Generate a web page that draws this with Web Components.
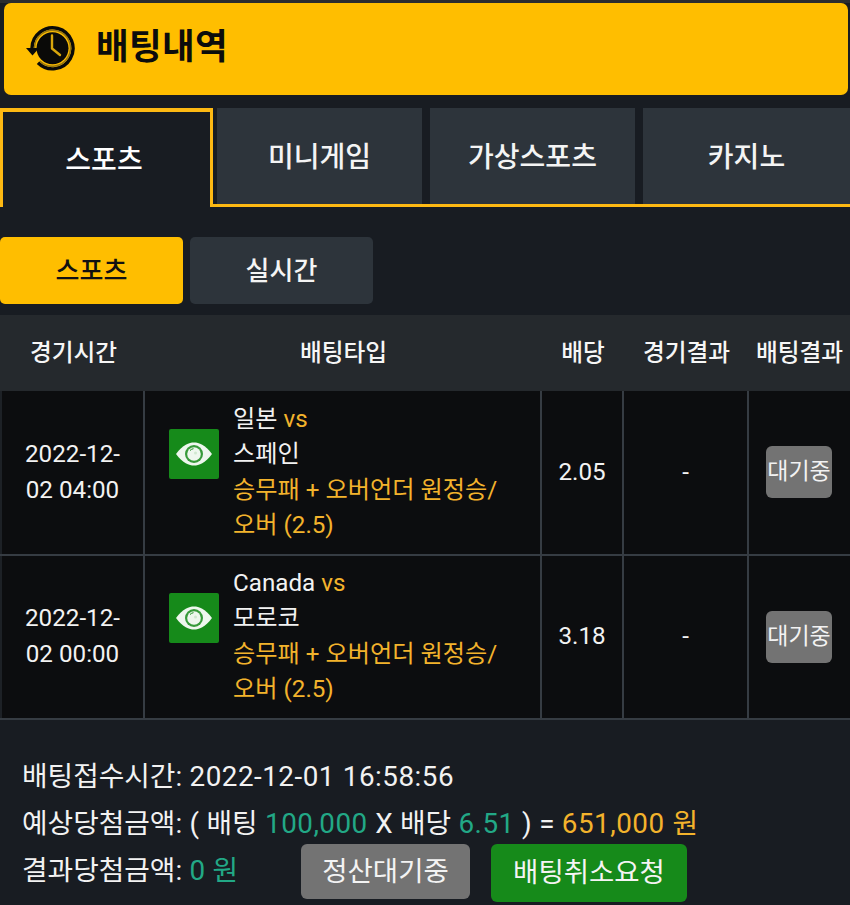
<!DOCTYPE html>
<html lang="ko"><head><meta charset="utf-8"><title>배팅내역</title>
<style>
html,body{margin:0;padding:0;background:#181c22;}
body{width:850px;height:905px;overflow:hidden;font-family:Roboto,"Noto Sans CJK KR",sans-serif;color:#fff;}
</style></head><body>
<bet-page></bet-page>
<script>
const FONT='Roboto,"Noto Sans CJK KR",sans-serif';
class BetHeader extends HTMLElement{constructor(){super();this.attachShadow({mode:'open'}).innerHTML=`<style>
:host{display:block;background:#2b2d2f;padding-top:3px}
.wrap{background:#181c22;padding:0 2px 13px 4px}
.bar{height:92px;background:#ffbe00;border-radius:7px;display:flex;align-items:center;color:#0c0c0c;box-sizing:border-box;padding-left:21px;gap:21px;padding-bottom:2px}
svg{display:block;width:50px;height:46px;flex:none}
h1{margin:0;font:700 35.500px/1 ${FONT};letter-spacing:.3px}
</style><div class="wrap"><div class="bar">
<svg viewBox="0 0 50 46" fill="none"><circle cx="27.500" cy="23.300" r="16" fill="#0a0a08"/><path d="M7 23.300A20.500 20.500 0 1 1 13 37.800" stroke="#0a0a08" stroke-width="3.400"/><path d="M9.500 23.300A18 18 0 1 1 14.800 36" stroke="#96760f" stroke-width="1.500"/><path d="M1 23H14L7.500 30.500Z" fill="#0a0a08"/><path d="M27 10.500V23.500L35 30" stroke="#d8a60c" stroke-width="2.400" stroke-linecap="round" stroke-linejoin="round"/></svg>
<h1><slot></slot></h1></div></div>`}}
customElements.define('bet-header',BetHeader);

class BetTabs extends HTMLElement{constructor(){super();this.attachShadow({mode:'open'}).innerHTML=`<style>
:host{display:grid;grid-template-columns:209px 205px 205px 207px;column-gap:8px;height:99px;box-sizing:border-box;position:relative}
.line{position:absolute;left:213px;right:0;bottom:0;height:3px;background:#fdb913}
</style><slot></slot><div class="line"></div>`}}
customElements.define('bet-tabs',BetTabs);
class BetTab extends HTMLElement{constructor(){super();this.attachShadow({mode:'open'}).innerHTML=`<style>
:host{display:flex;align-items:center;justify-content:center;box-sizing:border-box;height:96px;background:#2d343b;font:500 28px/1 ${FONT};color:#f4f4f4;padding-top:3px}
:host([active]){height:99px;background:#181c22;border:solid #fdb913;border-width:4px 3px 0 3px;margin-right:-4px;color:#fff;padding:2px 5px 0 0}
</style><slot></slot>`}}
customElements.define('bet-tab',BetTab);

class BetSub extends HTMLElement{constructor(){super();this.attachShadow({mode:'open'}).innerHTML=`<style>
:host{display:flex;align-items:center;justify-content:center;height:67px;width:183px;border-radius:5px;background:#2d343b;color:#f4f4f4;font:500 26px/1 ${FONT}}
:host([active]){background:#ffbe00;color:#111}
</style><slot></slot>`}}
customElements.define('bet-sub',BetSub);

const COLS='143px 397px 82px 125px 103px';
class BetHead extends HTMLElement{constructor(){super();this.attachShadow({mode:'open'}).innerHTML=`<style>
:host{display:grid;grid-template-columns:143px 397px 82px 125px 101px;height:76px;box-sizing:border-box;padding:2px 0 0 2px;background:#25292d;align-items:center;text-align:center;font:500 23.700px/1 ${FONT};color:#f6f6f6}
</style><slot></slot>`}}
customElements.define('bet-head',BetHead);

class BetRow extends HTMLElement{
constructor(){super();this.attachShadow({mode:'open'})}
connectedCallback(){const a=k=>this.getAttribute(k);this.shadowRoot.innerHTML=`<style>
:host{display:grid;grid-template-columns:${COLS};height:164px;box-sizing:border-box;background:#0c0d0f;border-bottom:2px solid #363c43;font:400 24.200px/35.500px ${FONT};color:#f2f2f2}
:host([first]){height:165px}
.c{display:flex;align-items:center;justify-content:center;text-align:center;border-left:2px solid #363c43;box-sizing:border-box;min-width:0}
.c.first{border-left:2px solid #1d2126;padding:0 15px 1px}
:host([first]) .c.first{padding-bottom:0}
.bet{justify-content:flex-start;align-items:flex-start;gap:14px;padding-left:24px;text-align:left}
.eye{flex:none;width:50px;height:50px;border-radius:2px;background:#168a1a;display:grid;place-items:center;margin-top:37px}
:host([first]) .eye{margin-top:38px}
.txt{width:270px;align-self:center;padding-bottom:1px}
:host([first]) .txt{padding-bottom:0}
.y{color:#f3b32c}
.wait{width:66px;height:52px;border-radius:6px;background:#737373;color:#f2f2f2;display:flex;align-items:center;justify-content:center;font-size:23px;white-space:nowrap;margin:-1px 0 0 -1px}
</style>
<div class="c first"><span>${a('time')}</span></div>
<div class="c bet"><div class="eye"><svg width="38" height="26" viewBox="0 0 38 26"><path d="M1 13C8 3.500 14 1.500 19 1.500S30 3.500 37 13C30 22.500 24 24.500 19 24.500S8 22.500 1 13Z" fill="#eef7ee"/><circle cx="19" cy="13" r="9" fill="#168a1a" opacity=".85"/><circle cx="19" cy="13" r="6.800" fill="#eef7ee"/><circle cx="20.500" cy="12" r="1.500" fill="#cfe8cf"/><path d="M15 9.500a6 6 0 0 1 3.500-1.800" stroke="#168a1a" stroke-width="1" fill="none"/></svg></div>
<div class="txt">${a('a')} <span class="y">vs</span><br>${a('b')}<br><span class="y">${a('type')}</span></div></div>
<div class="c">${a('odds')}</div><div class="c">-</div>
<div class="c"><div class="wait">대기중</div></div>`}}
customElements.define('bet-row',BetRow);

class BetBtn extends HTMLElement{constructor(){super();this.attachShadow({mode:'open'}).innerHTML=`<style>
:host{display:flex;align-items:center;justify-content:center;box-sizing:border-box;height:55px;width:169px;border-radius:6px;background:#737373;color:#f3f3f3;font:400 27.500px/1 ${FONT};flex:none}
:host([green]){background:#168a1a;height:58px;width:196px;color:#f4f4f4}
</style><slot></slot>`}}
customElements.define('bet-btn',BetBtn);

class BetFoot extends HTMLElement{constructor(){super();this.attachShadow({mode:'open'}).innerHTML=`<style>
:host{display:block;padding:33px 0 0 22px;font:400 27.800px/47px ${FONT};color:#f2f2f2;white-space:nowrap;word-spacing:.5px}
.n{letter-spacing:.5px}
.g{color:#22a886}.y{color:#f3b32c}
.row3{display:flex;align-items:flex-start;height:58px}
.l{width:279px;flex:none;line-height:47px}
.btns{display:flex;gap:21px;margin-top:-3px}
</style>
<div>배팅접수시간: <span class="n">2022-12-01 16:58:56</span></div>
<div>예상당첨금액: ( 배팅 <span class="g n">100,000</span> X 배당 <span class="g n">6.51</span> ) = <span class="y n">651,000 원</span></div>
<div class="row3"><span class="l">결과당첨금액: <span class="g">0 원</span></span><div class="btns"><slot></slot></div></div>`}}
customElements.define('bet-foot',BetFoot);

class BetPage extends HTMLElement{constructor(){super();this.attachShadow({mode:'open'}).innerHTML=`<style>
:host{display:block;width:850px}
.subs{display:flex;gap:7px;margin:30px 0 11px}
</style>
<bet-header>배팅내역</bet-header>
<bet-tabs><bet-tab active>스포츠</bet-tab><bet-tab>미니게임</bet-tab><bet-tab>가상스포츠</bet-tab><bet-tab>카지노</bet-tab></bet-tabs>
<div class="subs"><bet-sub active>스포츠</bet-sub><bet-sub>실시간</bet-sub></div>
<bet-head><span>경기시간</span><span>배팅타입</span><span>배당</span><span>경기결과</span><span>배팅결과</span></bet-head>
<bet-row first time="2022-12-02 04:00" a="일본" b="스페인" type="승무패 + 오버언더 원정승/오버 (2.5)" odds="2.05"></bet-row>
<bet-row time="2022-12-02 00:00" a="Canada" b="모로코" type="승무패 + 오버언더 원정승/오버 (2.5)" odds="3.18"></bet-row>
<bet-foot><bet-btn>정산대기중</bet-btn><bet-btn green>배팅취소요청</bet-btn></bet-foot>`}}
customElements.define('bet-page',BetPage);
</script></body></html>
